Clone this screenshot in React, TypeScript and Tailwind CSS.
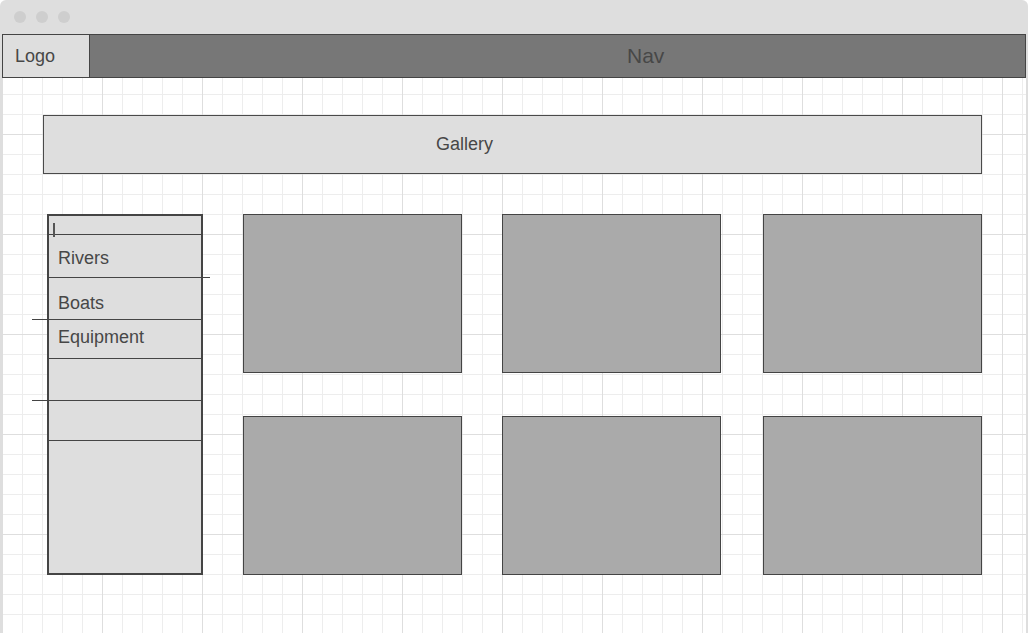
import React from 'react';

const tiles = [0, 1, 2, 3, 4, 5];

function Sidebar() {
    return (
        <div className="relative w-[156px] h-[361px] ml-[4px] shrink-0 border-2 border-[#444] bg-[#dedede] flex flex-col">
            {/* text cursor mark */}
            <div className="absolute left-[4px] top-[7px] w-[1.5px] h-[14px] bg-[#555]"></div>

            <div className="h-[19px] border-b border-[#444]"></div>
            <div className="relative h-[43px] border-b border-[#444] pl-[9px] pt-[13px] leading-[20px]">
                Rivers
                <div className="absolute left-full bottom-[-1px] w-[9px] h-px bg-[#444]"></div>
            </div>
            <div className="relative h-[42px] border-b border-[#444] pl-[9px] pt-[15px] leading-[20px]">
                Boats
                <div className="absolute right-full bottom-[-1px] w-[17px] h-px bg-[#444]"></div>
            </div>
            <div className="h-[39px] border-b border-[#444] pl-[9px] pt-[7px] leading-[20px]">Equipment</div>
            <div className="relative h-[42px] border-b border-[#444]">
                <div className="absolute right-full bottom-[-1px] w-[17px] h-px bg-[#444]"></div>
            </div>
            <div className="h-[40px] border-b border-[#444]"></div>
        </div>
    );
}

export default function App() {
    return (
        <div className="w-[1028px] h-[633px] bg-[#dedede] rounded-t-[6px] overflow-hidden flex flex-col px-[2px] font-['Liberation_Sans',Arial,sans-serif] text-[#474747]">
            {/* Window chrome */}
            <div className="h-[34px] shrink-0 flex items-center pl-[12px] gap-[10px]">
                <span className="w-[12px] h-[12px] rounded-full bg-[#cecece]"></span>
                <span className="w-[12px] h-[12px] rounded-full bg-[#cecece]"></span>
                <span className="w-[12px] h-[12px] rounded-full bg-[#cecece]"></span>
            </div>

            {/* Header */}
            <div className="h-[44px] shrink-0 flex border-[1.5px] border-[#444]">
                <div className="w-[87px] bg-[#dedede] border-r-[1.5px] border-[#444] flex items-center pl-[12px] text-[18px]">
                    Logo
                </div>
                <div className="flex-1 bg-[#777] flex items-center pl-[537px] text-[21px] text-[#474747]">
                    Nav
                </div>
            </div>

            {/* Canvas */}
            <div className="flex-1 bg-white bg-[linear-gradient(to_right,#dedede_1px,transparent_1px),linear-gradient(to_bottom,#dedede_1px,transparent_1px),linear-gradient(to_right,#ededed_1px,transparent_1px),linear-gradient(to_bottom,#ededed_1px,transparent_1px)] bg-[length:100px_100px,100px_100px,20px_20px,20px_20px] bg-[position:0_56px,0_56px,0_16px,0_16px] pl-[41px] pt-[37px] pr-[44px]">
                <div className="h-[59px] border border-[#4a4a4a] bg-[#dedede] flex items-center pl-[392px] text-[18px]">
                    Gallery
                </div>

                <div className="flex mt-[40px] text-[18px]">
                    <Sidebar />
                    <div className="ml-[40px] grid grid-cols-[219px_221px_219px] gap-x-[40px] gap-y-[43px]">
                        {tiles.map((t) => (
                            <div key={t} className="w-[219px] h-[159px] bg-[#aaa] border border-[#444]"></div>
                        ))}
                    </div>
                </div>
            </div>
        </div>
    );
}
